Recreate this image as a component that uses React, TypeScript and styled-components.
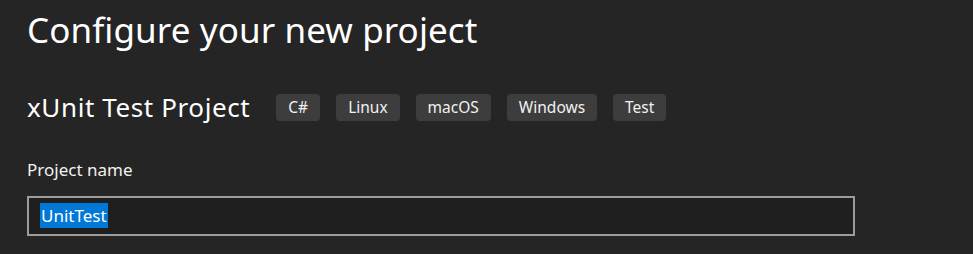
import React from "react";
import styled, { createGlobalStyle } from "styled-components";

const GlobalStyle = createGlobalStyle`
  html, body { margin: 0; padding: 0; background: #252525; }
  body { font-family: "Noto Sans", "Open Sans", sans-serif; color: #f1f1f1; }
`;

const Page = styled.div`
  display: flex;
  flex-direction: column;
  padding: 7px 0 0 27px;
  width: 828px;
`;

const Title = styled.h1`
  margin: 0;
  font-size: 35px;
  font-weight: 400;
  line-height: 46px;
  color: #ffffff;
  letter-spacing: 0.1px;
`;

const TemplateRow = styled.div`
  display: flex;
  align-items: center;
  margin-top: 38px;
  height: 32px;
`;

const TemplateName = styled.h2`
  margin: 0 26px 0 0;
  font-size: 26px;
  font-weight: 400;
  line-height: 32px;
  letter-spacing: 0.6px;
  color: #ffffff;
`;

const TagList = styled.ul`
  display: flex;
  gap: 16px;
  margin: 0;
  padding: 0;
  list-style: none;
`;

const Tag = styled.li`
  height: 27px;
  padding: 0 12px;
  display: flex;
  align-items: center;
  background: #3d3d3d;
  border-radius: 4px;
  font-size: 15.5px;
  color: #f1f1f1;
`;

const Label = styled.label`
  margin-top: 35px;
  font-size: 17px;
  line-height: 24px;
  color: #f1f1f1;
`;

const NameField = styled.div`
  margin-top: 14px;
  height: 36px;
  border: 2px solid #9c9c9c;
  background: #1f1f1f;
  display: flex;
  align-items: center;
  padding: 0 0 2px 11px;
  box-sizing: content-box;
  height: 34px;
`;

const Selected = styled.span`
  background: #0078d7;
  color: #ffffff;
  font-size: 17px;
  line-height: 25px;
  padding: 0 1px;
`;

const tags = ["C#", "Linux", "macOS", "Windows", "Test"];

export default function App() {
  return (
    <>
      <GlobalStyle />
      <Page>
        <Title>Configure your new project</Title>
        <TemplateRow>
          <TemplateName>xUnit Test Project</TemplateName>
          <TagList>
            {tags.map((t) => (
              <Tag key={t}>{t}</Tag>
            ))}
          </TagList>
        </TemplateRow>
        <Label>Project name</Label>
        <NameField>
          <Selected>UnitTest</Selected>
        </NameField>
      </Page>
    </>
  );
}
